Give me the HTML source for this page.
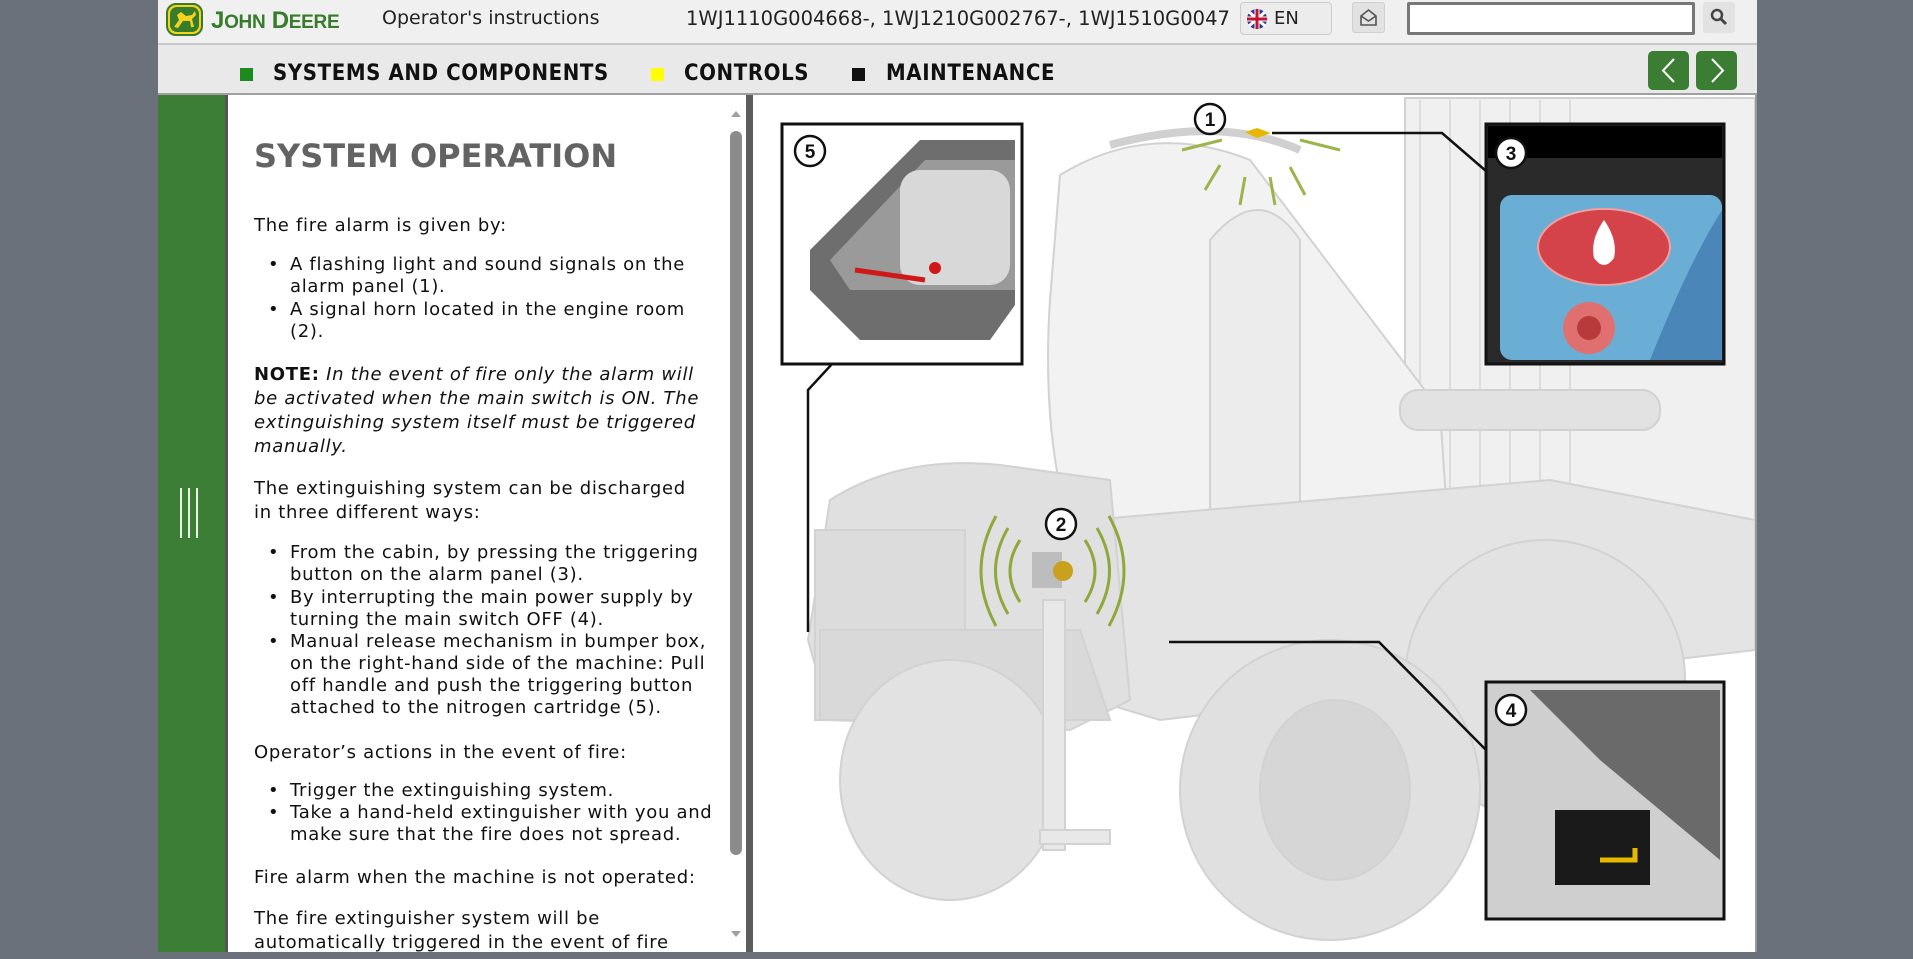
<!DOCTYPE html>
<html><head><meta charset="utf-8"><style>
*{margin:0;padding:0;box-sizing:border-box}
body{width:1913px;height:959px;background:#6a717b;position:relative;overflow:hidden;font-family:"DejaVu Sans",Verdana,sans-serif}
.abs{position:absolute}
#hdr{left:158px;top:0;width:1599px;height:45px;background:#f0f0f0;border-bottom:2px solid #c9c9c9}
#nav{left:158px;top:45px;width:1599px;height:50px;background:#e9e9e9;border-bottom:2px solid #a0a0a0}
.navt{font-family:"DejaVu Sans Condensed","DejaVu Sans",sans-serif;font-weight:bold;font-size:22px;color:#111;top:61px}
.sq{width:13px;height:13px;top:68px}
.gbtn{top:51px;width:41px;height:39px;background:#3b7d32;border-radius:5px}
#side{left:158px;top:95px;width:67px;height:857px;background:#3d7e36}
#txt{left:225px;top:95px;width:521px;height:857px;background:#fff;border-left:3px solid #555;overflow:hidden}
.t{position:absolute;left:26px;font-size:18px;letter-spacing:0.7px;color:#111;white-space:nowrap;line-height:22px}
.b{position:absolute;left:40px;font-size:18px;color:#111}
#img{left:746px;top:95px;width:1011px;height:857px;background:#fff;border-left:7px solid #5c5c5c;border-right:2px solid #999}
</style></head><body>
<div id="hdr" class="abs"></div>
<svg class="abs" style="left:166px;top:3px" width="37" height="33" viewBox="0 0 37 33">
<rect x="1" y="1" width="35" height="31" rx="9" fill="#f4d21f" stroke="#367c2b" stroke-width="2"/>
<rect x="4" y="4" width="29" height="25" rx="7" fill="#367c2b"/>
<path d="M8 24 L13 17 L11 12 L15 9 L20 13 L26 12 L29 8 L30 12 L26 16 L28 24 L25 24 L24 18 L17 18 L12 25 Z" fill="#f4d21f"/>
</svg>
<div class="abs" style="left:211px;top:7px;font-family:'Liberation Sans',sans-serif;font-size:24px;color:#367c2b;font-weight:bold;letter-spacing:-0.3px">J<span style="font-size:19px">OHN</span> D<span style="font-size:19px">EERE</span></div>
<div class="abs" style="left:382px;top:7px;font-family:'DejaVu Sans',sans-serif;font-size:19px;color:#222">Operator's instructions</div>
<div class="abs" style="left:686px;top:7px;font-family:'DejaVu Sans',sans-serif;font-size:19.5px;color:#222;white-space:nowrap">1WJ1110G004668-, 1WJ1210G002767-, 1WJ1510G0047</div>
<div class="abs" style="left:1240px;top:2px;width:92px;height:33px;background:#ececec;border:1px solid #ccc;border-radius:4px"></div>
<svg class="abs" style="left:1246px;top:8px" width="22" height="22" viewBox="0 0 22 22"><circle cx="11" cy="11" r="10" fill="#2a3a8f"/><path d="M3 4L19 18M19 4L3 18" stroke="#fff" stroke-width="3"/><path d="M11 1V21M1 11H21" stroke="#fff" stroke-width="5"/><path d="M11 1V21M1 11H21" stroke="#c8102e" stroke-width="3"/></svg>
<div class="abs" style="left:1274px;top:8px;font-family:'DejaVu Sans',sans-serif;font-size:18px;color:#222">EN</div>
<div class="abs" style="left:1352px;top:2px;width:33px;height:31px;background:#e2e2e2;border-radius:3px;border:1px solid #d0d0d0"></div>
<svg class="abs" style="left:1360px;top:9px" width="17" height="17" viewBox="0 0 17 17"><path d="M1 7L8.5 1L16 7V16H1Z M1 7L8.5 12L16 7" fill="none" stroke="#555" stroke-width="1.6"/></svg>
<div class="abs" style="left:1407px;top:2px;width:288px;height:33px;background:#fff;border:3px solid #777;border-radius:2px"></div>
<div class="abs" style="left:1703px;top:2px;width:32px;height:31px;background:#e2e2e2;border-radius:3px"></div>
<svg class="abs" style="left:1710px;top:8px" width="18" height="18" viewBox="0 0 18 18"><circle cx="7" cy="7" r="5" fill="none" stroke="#444" stroke-width="2.5"/><path d="M11 11L16 16" stroke="#444" stroke-width="3"/></svg>

<div id="nav" class="abs"></div>
<div class="abs sq" style="left:240px;background:#1e8a1e"></div>
<div class="abs navt" style="left:273px;letter-spacing:0.6px">SYSTEMS AND COMPONENTS</div>
<div class="abs sq" style="left:651px;background:#ffff00"></div>
<div class="abs navt" style="left:684px;letter-spacing:0.6px">CONTROLS</div>
<div class="abs sq" style="left:852px;background:#111"></div>
<div class="abs navt" style="left:886px;letter-spacing:0.6px">MAINTENANCE</div>
<div class="abs gbtn" style="left:1648px"></div>
<div class="abs gbtn" style="left:1696px"></div>
<svg class="abs" style="left:1648px;top:51px" width="90" height="39"><path d="M26 8L15 19.5L26 31" fill="none" stroke="#fff" stroke-width="2"/><path d="M64 8L75 19.5L64 31" fill="none" stroke="#fff" stroke-width="2"/></svg>

<div id="side" class="abs"></div>
<svg class="abs" style="left:178px;top:488px" width="24" height="50"><path d="M3 0V50M11 0V50M19 0V50" stroke="#e8f0e6" stroke-width="2"/></svg>

<div id="txt" class="abs">
<div class="t" style="top:41px;font-size:32px;letter-spacing:0;font-weight:bold;color:#636363;line-height:40px">SYSTEM OPERATION</div>
<div class="t" style="top:120px">The fire alarm is given by:</div>
<div class="b" style="top:159px">•</div><div class="t" style="left:62px;top:159px">A flashing light and sound signals on the<br>alarm panel (1).</div>
<div class="b" style="top:204px">•</div><div class="t" style="left:62px;top:204px">A signal horn located in the engine room<br>(2).</div>
<div class="t" style="top:268px;line-height:24px"><b>NOTE:</b> <i>In the event of fire only the alarm will<br>be activated when the main switch is ON. The<br>extinguishing system itself must be triggered<br>manually.</i></div>
<div class="t" style="top:382px;line-height:24px">The extinguishing system can be discharged<br>in three different ways:</div>
<div class="b" style="top:447px">•</div><div class="t" style="left:62px;top:447px">From the cabin, by pressing the triggering<br>button on the alarm panel (3).</div>
<div class="b" style="top:492px">•</div><div class="t" style="left:62px;top:492px">By interrupting the main power supply by<br>turning the main switch OFF (4).</div>
<div class="b" style="top:536px">•</div><div class="t" style="left:62px;top:536px">Manual release mechanism in bumper box,<br>on the right-hand side of the machine: Pull<br>off handle and push the triggering button<br>attached to the nitrogen cartridge (5).</div>
<div class="t" style="top:647px">Operator’s actions in the event of fire:</div>
<div class="b" style="top:685px">•</div><div class="t" style="left:62px;top:685px">Trigger the extinguishing system.</div>
<div class="b" style="top:707px">•</div><div class="t" style="left:62px;top:707px">Take a hand-held extinguisher with you and<br>make sure that the fire does not spread.</div>
<div class="t" style="top:772px">Fire alarm when the machine is not operated:</div>
<div class="t" style="top:812px;line-height:24px">The fire extinguisher system will be<br>automatically triggered in the event of fire</div>
<svg class="abs" style="left:499px;top:14px" width="18" height="830"><path d="M4 8L9 2L14 8Z" fill="#a0a0a0"/><rect x="3" y="22" width="12" height="724" rx="6" fill="#8c8c8c"/><path d="M4 822L9 828L14 822Z" fill="#a0a0a0"/></svg>
</div>

<div id="img" class="abs">
<svg width="1002" height="857" viewBox="753 95 1002 857" style="position:absolute;left:0;top:0">
<g fill="#e6e6e6" stroke="#d2d2d2" stroke-width="2">
<rect x="1405" y="98" width="350" height="460" fill="#f0f0f0"/>
<path d="M1420 100V550M1450 100V550M1480 100V550M1510 100V550M1540 100V550M1570 100V550" stroke="#dcdcdc" fill="none"/>
<path d="M1060 175 Q1150 120 1250 160 L1440 410 L1450 560 L1080 560 Q1040 450 1050 300 Z" fill="#f2f2f2"/>
<path d="M1110 145 Q1220 115 1300 150" fill="none" stroke="#d0d0d0" stroke-width="8"/>
<path d="M1210 240 Q1260 180 1300 240 L1300 550 L1210 560 Z" fill="#ececec"/>
<rect x="1400" y="390" width="260" height="40" rx="18" fill="#e2e2e2"/>
<path d="M1090 520 L1550 480 L1755 520 L1755 650 L1160 720 L1060 690 Z" fill="#e4e4e4"/>
<path d="M830 500 Q900 455 1000 465 L1110 480 L1130 700 L1070 730 L830 720 L808 640 Z" fill="#e0e0e0"/>
<rect x="815" y="530" width="150" height="190" fill="#dcdcdc"/>
<path d="M820 630H1080L1110 720H820Z" fill="#d9d9d9"/>
<ellipse cx="950" cy="780" rx="110" ry="120" fill="#e2e2e2"/>
<ellipse cx="1545" cy="680" rx="140" ry="140" fill="#e2e2e2"/>
<ellipse cx="1330" cy="790" rx="150" ry="150" fill="#e0e0e0"/>
<ellipse cx="1335" cy="790" rx="75" ry="90" fill="#d6d6d6"/>
<rect x="1043" y="600" width="22" height="250" fill="#e8e8e8"/>
<rect x="1040" y="830" width="70" height="14" fill="#e8e8e8"/>
</g>
<path d="M1245 132l12 -4l14 5l-14 5z" fill="#e8b800"/>
<g stroke="#9cb44a" stroke-width="3" fill="none"><path d="M1182 150l40 -10M1300 140l40 10M1205 190l15 -25M1240 205l5 -28M1275 205l-5 -28M1305 195l-15 -28"/></g>
<rect x="1032" y="552" width="30" height="36" fill="#bdbdbd"/>
<circle cx="1063" cy="571" r="10" fill="#c9a11e"/>
<g stroke="#8fa83c" stroke-width="3" fill="none">
<path d="M1020 540 Q1000 571 1020 602M1008 528 Q983 571 1008 614M996 516 Q966 571 996 626"/>
<path d="M1085 540 Q1105 571 1085 602M1097 528 Q1122 571 1097 614M1109 516 Q1139 571 1109 626"/>
</g>
<g stroke="#111" stroke-width="2.5" fill="none">
<path d="M1272 133H1442L1486 171"/>
<path d="M832 364L808 390V632"/>
<path d="M1169 642H1379L1486 750"/>
<path d="M1511 166L1560 220"/>
<path d="M1511 724L1608 850"/>
<path d="M810 166L925 265"/>
</g>
<rect x="782" y="124" width="240" height="240" fill="#fff" stroke="#111" stroke-width="3"/>
<path d="M810 250L920 140H1015V305L990 340H860L810 290Z" fill="#6e6e6e"/>
<path d="M830 260L925 160H1015V290H850Z" fill="#9a9a9a"/>
<rect x="900" y="170" width="110" height="115" rx="20" fill="#d8d8d8"/>
<path d="M855 270l70 10" stroke="#d01818" stroke-width="5"/>
<circle cx="935" cy="268" r="6" fill="#d01818"/>
<rect x="1486" y="124" width="238" height="240" fill="#2a2a2a" stroke="#111" stroke-width="3"/>
<rect x="1488" y="126" width="234" height="32" fill="#000"/>
<rect x="1500" y="195" width="222" height="165" rx="12" fill="#6aaed6"/>
<path d="M1650 360 Q1690 260 1722 210 V360Z" fill="#4a86b8"/>
<ellipse cx="1604" cy="247" rx="66" ry="38" fill="#d4424a" stroke="#f0a0a0" stroke-width="2"/>
<path d="M1604 220 Q1590 240 1594 258 Q1604 272 1614 258 Q1618 240 1604 220Z" fill="#fff"/>
<circle cx="1589" cy="328" r="26" fill="#e07070"/><circle cx="1589" cy="328" r="12" fill="#b83a3a"/>
<rect x="1486" y="682" width="238" height="237" fill="#cfcfcf" stroke="#111" stroke-width="3"/>
<path d="M1530 690H1720V860L1600 760Z" fill="#6a6a6a"/>
<rect x="1555" y="810" width="95" height="75" fill="#1a1a1a"/>
<path d="M1600 860h35v-12" stroke="#e8b800" stroke-width="5" fill="none"/>
<g fill="#fff" stroke="#111" stroke-width="2.5" font-family="Liberation Sans, sans-serif" font-weight="bold" font-size="19" text-anchor="middle">
<circle cx="1210" cy="119" r="15"/><text x="1210" y="126" fill="#111" stroke="none">1</text>
<circle cx="1061" cy="524" r="15"/><text x="1061" y="531" fill="#111" stroke="none">2</text>
<circle cx="1511" cy="153" r="15"/><text x="1511" y="160" fill="#111" stroke="none">3</text>
<circle cx="1511" cy="710" r="15"/><text x="1511" y="717" fill="#111" stroke="none">4</text>
<circle cx="810" cy="151" r="15"/><text x="810" y="158" fill="#111" stroke="none">5</text>
</g>
</svg>
</div>
</body></html>
